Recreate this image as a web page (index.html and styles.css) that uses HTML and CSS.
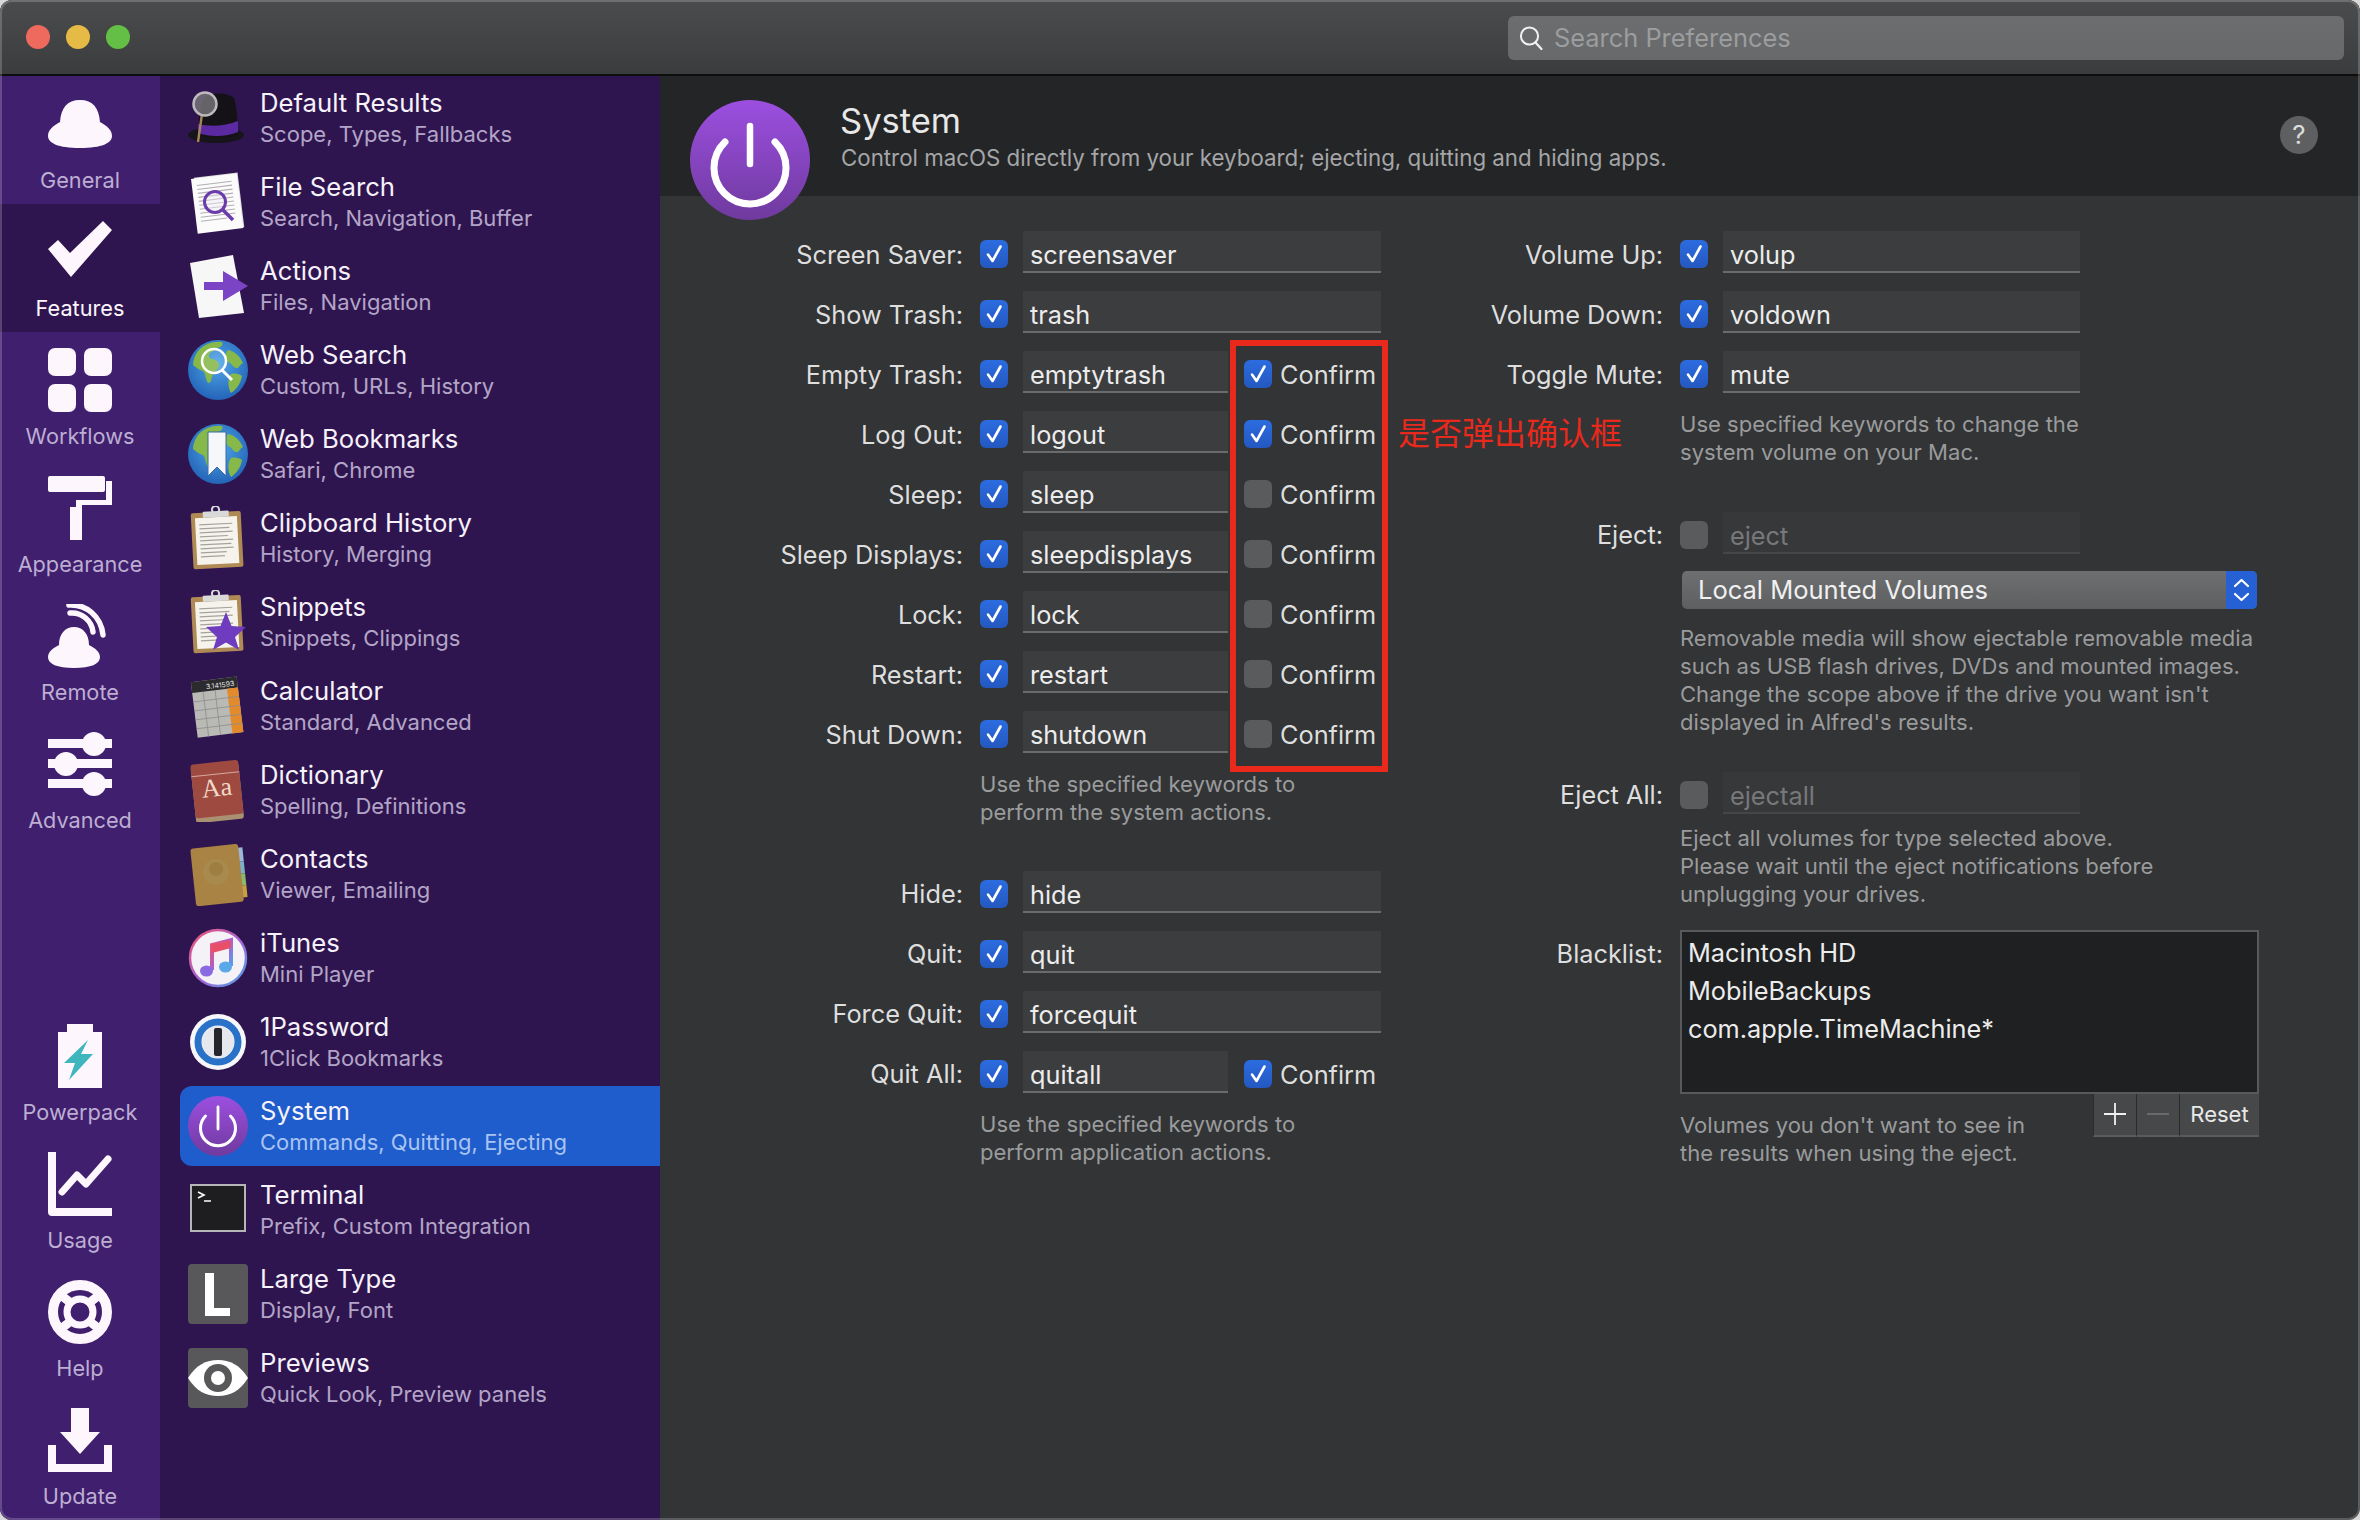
FILE: index.html
```html
<!DOCTYPE html>
<html lang="en">
<head>
<meta charset="utf-8">
<title>Alfred Preferences</title>
<link rel="stylesheet" href="styles.css">
</head>
<body>
<svg class="defs" width="0" height="0" aria-hidden="true">
  <defs>
    <symbol id="tick" viewBox="0 0 28 28"><path d="M8 14.500l4.500 6.500L20.500 6.500" fill="none" stroke="#fff" stroke-width="2.600" stroke-linecap="round" stroke-linejoin="round"/></symbol>
    <linearGradient id="pw" x1="0" y1="0" x2="0" y2="1"><stop offset="0" stop-color="#9c4fe0"/><stop offset="1" stop-color="#6f3a9e"/></linearGradient>
    <linearGradient id="note" x1="0" y1="0" x2="1" y2="1"><stop offset="0" stop-color="#f0526e"/><stop offset=".55" stop-color="#a264d8"/><stop offset="1" stop-color="#4aa8e8"/></linearGradient>
    <radialGradient id="sea" cx=".5" cy=".4" r=".6"><stop offset="0" stop-color="#4fa8e8"/><stop offset="1" stop-color="#2464b8"/></radialGradient>
    <symbol id="globe" viewBox="0 0 64 64">
      <circle cx="32" cy="32" r="30" fill="url(#sea)"/>
      <path d="M12 13c6-7 16-10 24-9 2 3-2 6-6 6-1 4-6 3-7 7-1 5 6 3 9 7 3 5-2 9-5 12-2 4-1 9-5 9-3-4-2-9-5-12-4-1-7-4-10-6 0-5 2-10 5-14z" fill="#86b84a"/>
      <path d="M42 12c6 1 12 6 15 13-4 2-4 6-7 5-4-1-4-5-8-6-3-3-3-9 0-12zM45 36c4-1 9 0 11 2-1 7-6 14-11 17-3-5-4-14 0-19z" fill="#86b84a"/>
    </symbol>
    <symbol id="clip" viewBox="0 0 64 64">
      <g transform="rotate(-3 32 32)">
        <rect x="6" y="6" width="50" height="56" rx="2" fill="#b08a55"/>
        <rect x="10" y="11" width="42" height="47" fill="#f5f3ec"/>
        <path d="M14 18h33M14 22h30M14 26h33M14 30h28M14 34h33M14 38h31M14 42h33M14 46h26M14 50h24" stroke="#a5a29c" stroke-width="1.200"/>
        <rect x="18" y="5" width="26" height="6" rx="1" fill="#d9d9d9"/>
        <circle cx="31" cy="3.500" r="3.600" fill="none" stroke="#d9d9d9" stroke-width="2"/>
      </g>
    </symbol>
  </defs>
</svg>

<div class="window">
  <header class="titlebar">
    <div class="lights"><span class="light red"></span><span class="light yellow"></span><span class="light green"></span></div>
    <div class="search">
      <svg class="search-ico" viewBox="0 0 26 26"><circle cx="11.500" cy="11" r="8.600" fill="none" stroke="#f2f2f2" stroke-width="2"/><path d="M17.500 17.500l6 6.500" stroke="#f2f2f2" stroke-width="2.200" stroke-linecap="round"/></svg>
      <span>Search Preferences</span>
    </div>
  </header>

  <div class="body">
    <nav class="nav">
      <div class="nav-group">
        <a class="nav-item">
          <svg class="nav-ico" viewBox="0 0 64 64"><path d="M32 8c-13 0-19 8-20 22C5 34 0 38 0 44c0 7 10 12 32 12s32-5 32-12c0-6-5-10-12-14C51 16 45 8 32 8z" fill="#fdf6fd"/></svg>
          <span>General</span>
        </a>
        <a class="nav-item active">
          <svg class="nav-ico" viewBox="0 0 64 64"><path d="M0 36l10-9 12 13L55 8l9 9-41 47z" transform="translate(0 -7)" fill="#fdf6fd"/></svg>
          <span>Features</span>
        </a>
        <a class="nav-item">
          <svg class="nav-ico" viewBox="0 0 64 64" fill="#fdf6fd"><rect width="28" height="28" rx="7"/><rect x="36" width="28" height="28" rx="7"/><rect y="36" width="28" height="28" rx="7"/><rect x="36" y="36" width="28" height="28" rx="7"/></svg>
          <span>Workflows</span>
        </a>
        <a class="nav-item">
          <svg class="nav-ico" viewBox="0 0 64 64" fill="#fdf6fd"><rect width="57" height="16" rx="2"/><path d="M57 5h7v24H34v6h-6V24h30V5z"/><rect x="22" y="31" width="12" height="33"/></svg>
          <span>Appearance</span>
        </a>
        <a class="nav-item">
          <svg class="nav-ico" viewBox="0 0 64 64"><path d="M26 23c-9 0-15 7-15 18C5 44 0 48 0 53c0 7 9 11 26 11s26-4 26-11c0-5-5-9-11-12 0-11-6-18-15-18z" fill="#fdf6fd"/><path d="M22 9c12-1 22 8 23 19M21 1c17-1 32 11 34 30" fill="none" stroke="#fdf6fd" stroke-width="5.500" stroke-linecap="round"/></svg>
          <span>Remote</span>
        </a>
        <a class="nav-item">
          <svg class="nav-ico" viewBox="0 0 64 64" fill="#fdf6fd"><rect y="7" width="64" height="9"/><rect y="27" width="64" height="9"/><rect y="47" width="64" height="9"/><circle cx="46" cy="12" r="12"/><circle cx="18" cy="32" r="12"/><circle cx="46" cy="52" r="12"/></svg>
          <span>Advanced</span>
        </a>
      </div>
      <div class="nav-group">
        <a class="nav-item">
          <svg class="nav-ico" viewBox="0 0 64 64"><path d="M10 8h9V0h26v8h9v56H10z" fill="#fdf6fd"/><path d="M40 16L16 39h11l-6 17 24-26H33z" fill="#3fb6bd"/></svg>
          <span>Powerpack</span>
        </a>
        <a class="nav-item">
          <svg class="nav-ico" viewBox="0 0 64 64"><path d="M4 0v60h60" fill="none" stroke="#fdf6fd" stroke-width="8" stroke-linejoin="round"/><path d="M14 40l15-17 9 9 22-25" fill="none" stroke="#fdf6fd" stroke-width="7" stroke-linecap="round" stroke-linejoin="round"/></svg>
          <span>Usage</span>
        </a>
        <a class="nav-item">
          <svg class="nav-ico" viewBox="0 0 64 64"><circle cx="32" cy="32" r="27" fill="none" stroke="#fdf6fd" stroke-width="10"/><circle cx="32" cy="32" r="13" fill="none" stroke="#fdf6fd" stroke-width="7"/><path d="M10 13l13 10M54 13L41 23M10 51l13-10M54 51L41 41" stroke="#fdf6fd" stroke-width="9"/></svg>
          <span>Help</span>
        </a>
        <a class="nav-item">
          <svg class="nav-ico" viewBox="0 0 64 64" fill="#fdf6fd"><path d="M23 0h18v24h11L32 46 12 24h11z"/><path d="M0 37h8v19h48V37h8v27H0z"/></svg>
          <span>Update</span>
        </a>
      </div>
    </nav>

    <aside class="list">
      <a class="app">
        <svg class="app-ico" viewBox="0 0 64 64"><ellipse cx="30" cy="49" rx="28" ry="8" fill="#17141c"/><path d="M13 49c-1-14 0-28 5-37 6-6 24-6 30 0 3 9 4 23 3 37-9 4-30 4-38 0z" fill="#141216"/><path d="M12 38c12 3 28 2 40-3v11c-12 5-28 5-40 1z" fill="#5b2aa0"/><path d="M12 56L16 28" stroke="#a5845a" stroke-width="2.400"/><circle cx="19" cy="18" r="11.500" fill="#7b787b" fill-opacity=".8" stroke="#bdb9bc" stroke-width="2.500"/></svg>
        <div class="app-text"><b>Default Results</b><small>Scope, Types, Fallbacks</small></div>
      </a>
      <a class="app">
        <svg class="app-ico" viewBox="0 0 64 64"><g transform="rotate(-7 32 32)"><rect x="11" y="5" width="44" height="55" fill="#dcdcdc"/><rect x="8" y="6" width="46" height="55" fill="#fbfbfb"/><path d="M13 13h35M13 17h35M13 21h35M13 25h35M13 29h35M13 33h35M13 37h35M13 41h35M13 45h35M13 49h26" stroke="#b3afb5" stroke-width="1.100"/></g><circle cx="29" cy="32" r="10.500" fill="#efeaf5" fill-opacity=".4" stroke="#6a3cab" stroke-width="3"/><path d="M37 40l10 10" stroke="#6a3cab" stroke-width="3.500"/></svg>
        <div class="app-text"><b>File Search</b><small>Search, Navigation, Buffer</small></div>
      </a>
      <a class="app">
        <svg class="app-ico" viewBox="0 0 64 64"><path d="M4 9L47 1l11 58-45 5z" fill="#f7f7f7"/><path d="M18 28h19V17l25 15-25 15V36H18z" fill="#7a44c4"/></svg>
        <div class="app-text"><b>Actions</b><small>Files, Navigation</small></div>
      </a>
      <a class="app">
        <svg class="app-ico"><use href="#globe"/><circle cx="28" cy="23" r="12" fill="#fff" fill-opacity=".12" stroke="#fff" stroke-width="2.500"/><path d="M36 32l10 10" stroke="#fff" stroke-width="3"/></svg>
        <div class="app-text"><b>Web Search</b><small>Custom, URLs, History</small></div>
      </a>
      <a class="app">
        <svg class="app-ico"><use href="#globe"/><path d="M22 10h18v44l-9-9-9 9z" fill="#f6f7fb" stroke="#3d6a9c" stroke-width="1"/></svg>
        <div class="app-text"><b>Web Bookmarks</b><small>Safari, Chrome</small></div>
      </a>
      <a class="app">
        <svg class="app-ico"><use href="#clip"/></svg>
        <div class="app-text"><b>Clipboard History</b><small>History, Merging</small></div>
      </a>
      <a class="app">
        <svg class="app-ico"><use href="#clip"/><path d="M40 22l5.500 14 14.500 1-11 10 4 13-13-7.500L27 60l4-13-11-10 14.500-1z" fill="#6f3cc0"/></svg>
        <div class="app-text"><b>Snippets</b><small>Snippets, Clippings</small></div>
      </a>
      <a class="app">
        <svg class="app-ico" viewBox="0 0 64 64"><g transform="rotate(-7 32 32)"><rect x="8" y="5" width="46" height="56" fill="#b9b9b5"/><rect x="8" y="5" width="46" height="11" fill="#2b2b2d"/><text x="51" y="14" class="calc-text" text-anchor="end">3.141593</text><rect x="43" y="16" width="11" height="45" fill="#e28a2c"/><path d="M8 25h46M8 34h46M8 43h46M8 52h46M19 16v45M31 16v45" stroke="#8e8e8a" stroke-width=".800"/></g></svg>
        <div class="app-text"><b>Calculator</b><small>Standard, Advanced</small></div>
      </a>
      <a class="app">
        <svg class="app-ico" viewBox="0 0 64 64"><g transform="rotate(-6 32 32)"><rect x="7" y="7" width="48" height="56" rx="3" fill="#a89070"/><rect x="7" y="4" width="48" height="54" rx="3" fill="#9e4a40"/><path d="M7 16h48" stroke="#d5a99f" stroke-width="1"/><text x="31" y="38" class="dict-text" text-anchor="middle">Aa</text></g></svg>
        <div class="app-text"><b>Dictionary</b><small>Spelling, Definitions</small></div>
      </a>
      <a class="app">
        <svg class="app-ico" viewBox="0 0 64 64"><g transform="rotate(-6 32 32)"><rect x="54" y="8" width="5" height="14" fill="#9cb8d8"/><rect x="54" y="22" width="5" height="12" fill="#7fb0c8"/><rect x="54" y="34" width="5" height="12" fill="#8cb86a"/><rect x="54" y="46" width="5" height="12" fill="#c8a040"/><rect x="7" y="4" width="48" height="58" rx="3" fill="#a98344"/></g><circle cx="30" cy="30" r="13" fill="#a98a4e"/><circle cx="30" cy="27" r="7" fill="#9f7e42"/></svg>
        <div class="app-text"><b>Contacts</b><small>Viewer, Emailing</small></div>
      </a>
      <a class="app">
        <svg class="app-ico" viewBox="0 0 64 64"><circle cx="32" cy="32" r="28" fill="#f4f2f6" stroke="url(#note)" stroke-width="2.500"/><path d="M26 44V19l19-5v26" fill="none" stroke="url(#note)" stroke-width="4"/><ellipse cx="20.500" cy="45" rx="6.500" ry="5.500" fill="#8a6ae0"/><ellipse cx="39.500" cy="41" rx="6.500" ry="5.500" fill="#5aa8e8"/><path d="M26 19l19-5v8l-19 5z" fill="#e8506a"/></svg>
        <div class="app-text"><b>iTunes</b><small>Mini Player</small></div>
      </a>
      <a class="app">
        <svg class="app-ico" viewBox="0 0 64 64"><circle cx="32" cy="32" r="28" fill="#f7f7f9"/><circle cx="32" cy="32" r="20" fill="none" stroke="#2a72c8" stroke-width="7"/><circle cx="32" cy="32" r="16" fill="#e6e8ee"/><rect x="28" y="18" width="8" height="28" rx="2" fill="#24262c"/></svg>
        <div class="app-text"><b>1Password</b><small>1Click Bookmarks</small></div>
      </a>
      <a class="app selected">
        <svg class="app-ico" viewBox="0 0 64 64"><circle cx="32" cy="32" r="30" fill="url(#pw)"/><path d="M32 13v22" stroke="#fff" stroke-width="2.800" stroke-linecap="round"/><path d="M19.500 22a17.500 17.500 0 1 0 25 0" fill="none" stroke="#fff" stroke-width="3" stroke-linecap="round"/></svg>
        <div class="app-text"><b>System</b><small>Commands, Quitting, Ejecting</small></div>
      </a>
      <a class="app">
        <svg class="app-ico" viewBox="0 0 64 64"><rect x="5" y="7" width="54" height="46" fill="#1e1e20" stroke="#b5b5ba" stroke-width="2"/><path d="M12 14l6 3-6 3M18 23h7" fill="none" stroke="#fff" stroke-width="1.600"/></svg>
        <div class="app-text"><b>Terminal</b><small>Prefix, Custom Integration</small></div>
      </a>
      <a class="app">
        <svg class="app-ico" viewBox="0 0 64 64"><rect x="2" y="2" width="60" height="60" rx="4" fill="#58585a"/><path d="M19 14h9v35h16v8H19z" transform="translate(0 -3)" fill="#fff"/></svg>
        <div class="app-text"><b>Large Type</b><small>Display, Font</small></div>
      </a>
      <a class="app">
        <svg class="app-ico" viewBox="0 0 64 64"><rect x="2" y="2" width="60" height="60" rx="4" fill="#58585a"/><path d="M2 32c8-13 18-18 30-18s22 5 30 18c-8 13-18 18-30 18S10 45 2 32z" fill="#fff"/><circle cx="32" cy="32" r="14" fill="#58585a"/><circle cx="32" cy="32" r="7" fill="#fff"/></svg>
        <div class="app-text"><b>Previews</b><small>Quick Look, Preview panels</small></div>
      </a>
    </aside>

    <main class="main">
      <div class="page-head">
        <svg class="head-ico" viewBox="0 0 120 120"><circle cx="60" cy="60" r="60" fill="url(#pw)"/><path d="M60 26v38" stroke="#fff" stroke-width="6.500" stroke-linecap="round"/><path d="M35 42a36 36 0 1 0 50 0" fill="none" stroke="#fff" stroke-width="7" stroke-linecap="round"/></svg>
        <div class="head-text">
          <h1>System</h1>
          <p>Control macOS directly from your keyboard; ejecting, quitting and hiding apps.</p>
        </div>
        <span class="help">?</span>
      </div>

      <div class="form">
        <section class="col col-left">
          <div class="row"><label>Screen Saver:</label><span class="cb on"><svg><use href="#tick"/></svg></span><div class="field">screensaver</div></div>
          <div class="row"><label>Show Trash:</label><span class="cb on"><svg><use href="#tick"/></svg></span><div class="field">trash</div></div>
          <div class="row"><label>Empty Trash:</label><span class="cb on"><svg><use href="#tick"/></svg></span><div class="field short">emptytrash</div><span class="cb on"><svg><use href="#tick"/></svg></span><span class="confirm">Confirm</span></div>
          <div class="row"><label>Log Out:</label><span class="cb on"><svg><use href="#tick"/></svg></span><div class="field short">logout</div><span class="cb on"><svg><use href="#tick"/></svg></span><span class="confirm">Confirm</span></div>
          <div class="row"><label>Sleep:</label><span class="cb on"><svg><use href="#tick"/></svg></span><div class="field short">sleep</div><span class="cb"></span><span class="confirm">Confirm</span></div>
          <div class="row"><label>Sleep Displays:</label><span class="cb on"><svg><use href="#tick"/></svg></span><div class="field short">sleepdisplays</div><span class="cb"></span><span class="confirm">Confirm</span></div>
          <div class="row"><label>Lock:</label><span class="cb on"><svg><use href="#tick"/></svg></span><div class="field short">lock</div><span class="cb"></span><span class="confirm">Confirm</span></div>
          <div class="row"><label>Restart:</label><span class="cb on"><svg><use href="#tick"/></svg></span><div class="field short">restart</div><span class="cb"></span><span class="confirm">Confirm</span></div>
          <div class="row"><label>Shut Down:</label><span class="cb on"><svg><use href="#tick"/></svg></span><div class="field short">shutdown</div><span class="cb"></span><span class="confirm">Confirm</span></div>
          <p class="note note-sys">Use the specified keywords to<br>perform the system actions.</p>
          <div class="row"><label>Hide:</label><span class="cb on"><svg><use href="#tick"/></svg></span><div class="field">hide</div></div>
          <div class="row"><label>Quit:</label><span class="cb on"><svg><use href="#tick"/></svg></span><div class="field">quit</div></div>
          <div class="row"><label>Force Quit:</label><span class="cb on"><svg><use href="#tick"/></svg></span><div class="field">forcequit</div></div>
          <div class="row"><label>Quit All:</label><span class="cb on"><svg><use href="#tick"/></svg></span><div class="field short">quitall</div><span class="cb on"><svg><use href="#tick"/></svg></span><span class="confirm">Confirm</span></div>
          <p class="note note-app">Use the specified keywords to<br>perform application actions.</p>
          <div class="redbox"></div>
          <div class="redtext">是否弹出确认框</div>
        </section>

        <section class="col col-right">
          <div class="row"><label>Volume Up:</label><span class="cb on"><svg><use href="#tick"/></svg></span><div class="field">volup</div></div>
          <div class="row"><label>Volume Down:</label><span class="cb on"><svg><use href="#tick"/></svg></span><div class="field">voldown</div></div>
          <div class="row"><label>Toggle Mute:</label><span class="cb on"><svg><use href="#tick"/></svg></span><div class="field">mute</div></div>
          <p class="note note-vol">Use specified keywords to change the<br>system volume on your Mac.</p>
          <div class="row"><label>Eject:</label><span class="cb"></span><div class="field off">eject</div></div>
          <div class="select"><span>Local Mounted Volumes</span><span class="stepper"><svg viewBox="0 0 31 38"><path d="M9 15l6.500-6 6.500 6M9 23l6.500 6 6.500-6" fill="none" stroke="#fff" stroke-width="2.200" stroke-linecap="round" stroke-linejoin="round"/></svg></span></div>
          <p class="note note-rem">Removable media will show ejectable removable media<br>such as USB flash drives, DVDs and mounted images.<br>Change the scope above if the drive you want isn't<br>displayed in Alfred's results.</p>
          <div class="row"><label>Eject All:</label><span class="cb"></span><div class="field off">ejectall</div></div>
          <p class="note note-all">Eject all volumes for type selected above.<br>Please wait until the eject notifications before<br>unplugging your drives.</p>
          <div class="blacklist">
            <label>Blacklist:</label>
            <div class="bl-wrap">
              <div class="bl-box">
                <div>Macintosh HD</div>
                <div>MobileBackups</div>
                <div>com.apple.TimeMachine*</div>
              </div>
              <div class="bl-foot">
                <p class="note note-bl">Volumes you don't want to see in<br>the results when using the eject.</p>
                <div class="bl-btns">
                  <span class="btn btn-sq"><svg viewBox="0 0 24 24"><path d="M12 1v22M1 12h22" stroke="#f0f0f0" stroke-width="1.800"/></svg></span>
                  <span class="btn btn-sq"><svg viewBox="0 0 24 24"><path d="M1 12h22" stroke="#6e6f71" stroke-width="1.800"/></svg></span>
                  <span class="btn btn-reset">Reset</span>
                </div>
              </div>
            </div>
          </div>
        </section>
      </div>
    </main>
  </div>
</div>
</body>
</html>
```
FILE: styles.css
```css
* { box-sizing: border-box; }
html, body { margin: 0; height: 100%; background: #d9d9d9; }
body { font-family: Inter, "Noto Sans", "Liberation Sans", "Noto Sans CJK SC", sans-serif; overflow: hidden; }
.defs { position: absolute; }
.window { position: relative; width: 2360px; height: 1520px; display: flex; flex-direction: column; border-radius: 12px; overflow: hidden; background: #323436; }
.window::after { content: ""; position: absolute; inset: 0; border: 2px solid rgba(255, 255, 255, .2); border-radius: 12px; pointer-events: none; }

.titlebar { height: 76px; flex: none; display: flex; align-items: center; justify-content: space-between; padding: 0 16px 0 26px; background: linear-gradient(#4a4c4d, #3a3c3d); border-bottom: 2px solid #0e0e0f; }
.lights { display: flex; gap: 16px; }
.light { width: 24px; height: 24px; border-radius: 50%; }
.red { background: #ee6a5e; }
.yellow { background: #e5bb45; }
.green { background: #63bf45; }
.search { width: 836px; height: 44px; margin-top: 2px; border-radius: 6px; background: linear-gradient(#6b6d6e, #68696b); display: flex; align-items: center; gap: 10px; padding-left: 10px; color: #9b9d9e; font-size: 25.400px; line-height: 46px; }
.search-ico { width: 26px; height: 26px; }

.body { flex: 1; display: flex; min-height: 0; }

.nav { width: 160px; flex: none; background: #3f1f6e; display: flex; flex-direction: column; justify-content: space-between; }
.nav-item { height: 128px; display: flex; flex-direction: column; align-items: center; padding-top: 16px; color: #bdaed2; font-size: 21.700px; }
.nav-item.active { background: #2f154f; color: #fdf6fd; }
.nav-ico { width: 64px; height: 64px; margin-bottom: 10px; }
.nav-item span { line-height: 28px; }

.list { width: 500px; flex: none; background: #2f154f; padding: 2px 0 0 20px; display: flex; flex-direction: column; gap: 4px; }
.app { height: 80px; display: flex; align-items: center; gap: 10px; padding-left: 6px; border-radius: 12px 0 0 12px; }
.app.selected { background: #1f5ccc; }
.app-ico { width: 64px; height: 64px; flex: none; }
.app-text { display: flex; flex-direction: column; }
.app-text b { font-weight: 400; font-size: 25.700px; line-height: 32px; color: #f6f2fa; }
.app-text small { font-size: 22px; line-height: 30px; color: #b3a5c8; }
.app.selected small { color: #a8c4f2; }
.calc-text { font: 7px Inter, sans-serif; fill: #e0e0e0; }
.dict-text { font: 26px "Liberation Serif", serif; fill: #f0d8c8; }

.main { flex: 1; min-width: 0; display: flex; flex-direction: column; }
.page-head { height: 120px; flex: none; position: relative; background: #242527; display: flex; padding-left: 30px; }
.head-ico { width: 120px; height: 120px; margin-top: 24px; flex: none; position: relative; z-index: 1; }
.head-text { margin-left: 30px; padding-top: 22px; }
h1 { margin: 0; font-size: 34.500px; font-weight: 400; line-height: 45px; color: #e8e8e8; }
p { margin: 0; }
.head-text p { font-size: 22.300px; line-height: 30px; margin-top: 0; margin-left: 1px; color: #a5a6a7; }
.help { position: absolute; right: 42px; top: 40px; width: 38px; height: 38px; border-radius: 50%; background: #5e5f61; color: #dcdcdc; font-size: 26px; line-height: 38px; text-align: center; }

.form { display: flex; padding-top: 28px; }
.col { position: relative; flex: none; }
.col-left { width: 728px; --lab: 303px; }
.col-right { --lab: 275px; }

.row { height: 60px; display: flex; align-items: center; }
label { font-size: 25.300px; color: #dedede; text-align: right; }
.row > label { width: var(--lab); flex: none; }
.cb { width: 28px; height: 28px; flex: none; border-radius: 6px; background: #5a5b5d; margin: 0 15px 0 17px; display: block; }
.cb.on { background: linear-gradient(#2c6ce0, #2458c0); }
.cb svg { width: 28px; height: 28px; display: block; }
.field { width: 358px; height: 42px; margin-bottom: 4px; background: #3c3d3f; border-bottom: 2px solid #6a6b6d; color: #ececec; font-size: 25.300px; line-height: 47px; padding-left: 7px; }
.col-right .field { width: 357px; }
.field.short { width: 205px; }
.field.short + .cb { margin: 0 8px 0 16px; }
.field.off { background: #37383a; border-bottom-color: #454648; color: #77787a; }
.confirm { font-size: 25.300px; line-height: 30px; padding-top: 2px; color: #dedede; }

.note { margin-left: 320px; font-size: 22.050px; line-height: 28.300px; color: #9a9b9c; white-space: nowrap; }
.col-right .note { margin-left: 292px; }
.note-sys { margin-top: 6px; margin-bottom: 37px; }
.note-app { margin-top: 6px; }
.note-vol { margin-top: 6px; margin-bottom: 38px; }
.col-right .note-rem { margin: 15px 0 28px 292px; }
.note-all { margin-top: -1px; margin-bottom: 21px; }

.redbox { position: absolute; left: 570px; top: 116px; width: 158px; height: 432px; border: 6px solid #e8291c; }
.redtext { position: absolute; left: 738px; top: 187px; font-size: 32px; line-height: 40px; color: #e8291c; white-space: nowrap; font-family: "Noto Sans CJK SC", sans-serif; }

.select { margin: 6px 0 0 294px; width: 575px; height: 38px; border-radius: 5px; background: linear-gradient(#6e6f71, #5e5f61); display: flex; align-items: center; justify-content: space-between; padding-left: 16px; color: #f0f0f0; font-size: 25.500px; }
.stepper { width: 31px; height: 38px; background: #2560d4; border-radius: 0 5px 5px 0; display: block; }
.stepper svg { display: block; width: 31px; height: 38px; }

.blacklist { display: flex; }
.blacklist > label { width: var(--lab); flex: none; line-height: 47px; }
.bl-wrap { margin-left: 17px; width: 579px; }
.bl-box { height: 164px; background: #1f2022; border: 2px solid #58595b; padding: 2px 6px; color: #ececec; font-size: 25.300px; line-height: 38px; }
.bl-foot { display: flex; justify-content: space-between; }
.col-right .note-bl { margin: 17px 0 0; }
.bl-btns { display: flex; height: 43px; }
.btn { background: #47484a; border-bottom: 2px solid #5a5b5d; border-left: 1px solid #2a2b2c; display: flex; align-items: center; justify-content: center; color: #e8e8e8; }
.btn-sq { width: 43px; }
.btn-sq svg { width: 24px; height: 24px; }
.btn-reset { width: 80px; font-size: 22px; }
```
